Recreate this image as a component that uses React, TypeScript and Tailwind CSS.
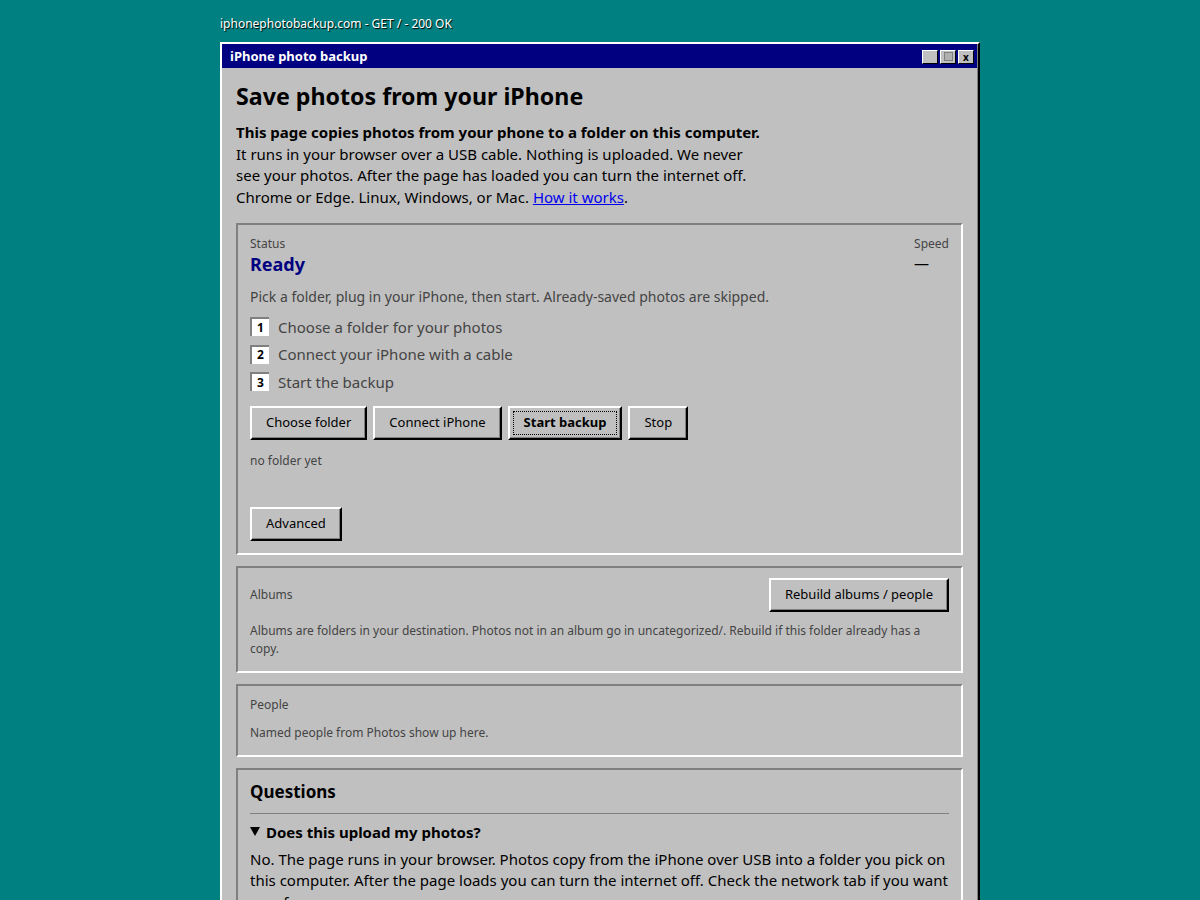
import React from "react";

const btn =
  "h-[34px] px-[14px] text-[13px] text-black bg-[#c0c0c0] border-2 border-t-white border-l-white border-r-black border-b-black shadow-[inset_-1px_-1px_#808080] leading-none";

function Panel({ children, className = "" }: { children: React.ReactNode; className?: string }) {
  return (
    <div
      className={
        "border-2 border-t-[#808080] border-l-[#808080] border-r-white border-b-white px-[12px] " + className
      }
    >
      {children}
    </div>
  );
}

function Step({ n, text }: { n: number; text: string }) {
  return (
    <div className="flex items-center gap-[9px] h-[22px]">
      <div className="w-[19px] h-[19px] bg-white border-t-2 border-l-2 border-t-[#808080] border-l-[#808080] flex items-center justify-center text-[12px] font-bold text-black leading-none">
        {n}
      </div>
      <div className="text-[15px] text-[#444]">{text}</div>
    </div>
  );
}

export default function App() {
  return (
    <div className="min-h-screen bg-[#008080] font-['Noto_Sans','Open_Sans',sans-serif] overflow-hidden">
      <div className="mx-auto w-[760px] pt-[15px]">
        <div className="text-[12px] leading-[18px] text-white [text-shadow:1px_1px_1px_#000] mb-[9px]">
          iphonephotobackup.com - GET / - 200 OK
        </div>
        <div className="bg-[#c0c0c0] border-2 border-t-white border-l-white border-r-black border-b-black shadow-[inset_-1px_-1px_#808080] pr-[1px] h-[900px]">
          <div className="h-[24px] pt-[1px] bg-[#000080] flex items-center justify-between pl-[8px] pr-[3px]">
            <div className="text-[13px] font-bold text-white">iPhone photo backup</div>
            <div className="flex gap-[2px]">
              <div className="w-[16px] h-[14px] bg-[#c0c0c0] border border-t-white border-l-white border-r-black border-b-black" />
              <div className="w-[16px] h-[14px] bg-[#c0c0c0] border border-t-white border-l-white border-r-black border-b-black flex items-center justify-center">
                <div className="w-[9px] h-[9px] border border-[#808080] bg-[#b0b0b0]" />
              </div>
              <div className="w-[16px] h-[14px] bg-[#c0c0c0] border border-t-white border-l-white border-r-black border-b-black flex items-center justify-center text-[10px] font-bold leading-none text-black">
                x
              </div>
            </div>
          </div>
          <div className="px-[14px]">
            <h1 className="mt-[12px] text-[23.2px] leading-[32px] font-bold text-black">Save photos from your iPhone</h1>
            <div className="mt-[10px] max-w-[530px] text-[15px] leading-[21.7px] text-black">
              <div className="font-bold">This page copies photos from your phone to a folder on this computer.</div>
              <div>
                It runs in your browser over a USB cable. Nothing is uploaded. We never see your photos. After the
                page has loaded you can turn the internet off. Chrome or Edge. Linux, Windows, or Mac.{" "}
                <a href="#" className="text-[#0000ee] underline">
                  How it works
                </a>
                .
              </div>
            </div>

            <Panel className="mt-[14px] pt-[11px] pb-[12px]">
              <div className="flex justify-between">
                <div>
                  <div className="text-[12px] leading-[16px] text-[#444]">Status</div>
                  <div className="text-[18px] leading-[24px] font-bold text-[#000080]">Ready</div>
                </div>
                <div>
                  <div className="text-[12px] leading-[16px] text-[#444]">Speed</div>
                  <div className="text-[15px] leading-[22px] text-black">—</div>
                </div>
              </div>
              <div className="mt-[11px] text-[14px] leading-[20px] text-[#444]">
                Pick a folder, plug in your iPhone, then start. Already-saved photos are skipped.
              </div>
              <div className="mt-[9px] flex flex-col gap-[5.5px]">
                <Step n={1} text="Choose a folder for your photos" />
                <Step n={2} text="Connect your iPhone with a cable" />
                <Step n={3} text="Start the backup" />
              </div>
              <div className="mt-[13px] flex gap-[6px]">
                <button className={btn}>Choose folder</button>
                <button className={btn}>Connect iPhone</button>
                <button className={btn + " font-bold relative"}>
                  <span className="absolute inset-[3px] border border-dotted border-black" />
                  Start backup
                </button>
                <button className={btn}>Stop</button>
              </div>
              <div className="mt-[13px] text-[12px] leading-[16px] text-[#444]">no folder yet</div>
              <div className="mt-[38px]">
                <button className={btn}>Advanced</button>
              </div>
            </Panel>

            <Panel className="mt-[11px] pt-[10px] pb-[13px]">
              <div className="flex items-center justify-between">
                <div className="text-[12px] text-[#444]">Albums</div>
                <button className={btn}>Rebuild albums / people</button>
              </div>
              <div className="mt-[10px] text-[12px] leading-[18px] text-[#444]">
                Albums are folders in your destination. Photos not in an album go in uncategorized/. Rebuild if this
                folder already has a copy.
              </div>
            </Panel>

            <Panel className="mt-[11px] pt-[11px] pb-[14px]">
              <div className="text-[12px] leading-[16px] text-[#444]">People</div>
              <div className="mt-[12px] text-[12px] leading-[16px] text-[#444]">Named people from Photos show up here.</div>
            </Panel>

            <Panel className="mt-[11px] pt-[10px] pb-[12px]">
              <div className="text-[17px] leading-[24px] font-bold text-black">Questions</div>
              <div className="mt-[9px] border-t border-[#808080]" />
              <div className="mt-[8px] flex items-center gap-[6px] text-[15px] leading-[20px] font-bold text-black">
                <svg width="10" height="9" viewBox="0 0 10 9" className="shrink-0">
                  <path d="M0 0 H10 L5 9 Z" fill="#000" />
                </svg>
                <span>Does this upload my photos?</span>
              </div>
              <div className="mt-[7px] text-[15px] leading-[21.5px] text-black">
                No. The page runs in your browser. Photos copy from the iPhone over USB into a folder you pick on this
                computer. After the page loads you can turn the internet off. Check the network tab if you want
                proof.
              </div>
            </Panel>
          </div>
        </div>
      </div>
    </div>
  );
}
